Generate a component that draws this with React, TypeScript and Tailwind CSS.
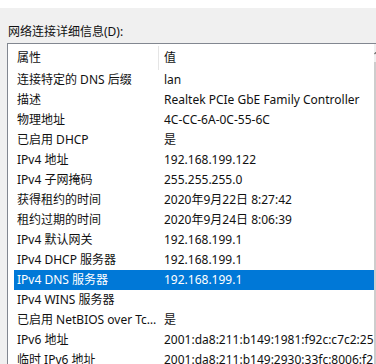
const rows: [string, string][] = [
  ["连接特定的 DNS 后缀", "lan"],
  ["描述", "Realtek PCIe GbE Family Controller"],
  ["物理地址", "4C-CC-6A-0C-55-6C"],
  ["已启用 DHCP", "是"],
  ["IPv4 地址", "192.168.199.122"],
  ["IPv4 子网掩码", "255.255.255.0"],
  ["获得租约的时间", "2020年9月22日 8:27:42"],
  ["租约过期的时间", "2020年9月24日 8:06:39"],
  ["IPv4 默认网关", "192.168.199.1"],
  ["IPv4 DHCP 服务器", "192.168.199.1"],
  ["IPv4 DNS 服务器", "192.168.199.1"],
  ["IPv4 WINS 服务器", ""],
  ["已启用 NetBIOS over Tcpip", "是"],
  ["IPv6 地址", "2001:da8:211:b149:1981:f92c:c7c2:25"],
  ["临时 IPv6 地址", "2001:da8:211:b149:2930:33fc:8006:f2"],
];

const font = {
  fontFamily: '"Noto Sans", "Noto Sans CJK SC", sans-serif',
};

export default function App() {
  const selected = 10;

  return (
    <div
      className="w-[376px] h-[364px] overflow-hidden bg-[#f0f0f0] text-[12px] text-[#111]"
      style={font}
    >
      <div className="h-2 bg-white" />
      <div className="h-[35px] pl-2 pt-[15px] leading-[18px]">网络连接详细信息(D):</div>

      <div className="ml-[7px] flex border-l border-t border-[#828790] bg-white">
        <div className="flex-1 pl-[6px]">
          <div className="flex h-[26px] items-center pt-[2px]">
            <div className="w-[144px] pl-[3px]">属性</div>
            <div className="h-full w-px bg-[#e5e5e5]" />
            <div className="pl-[5px]">值</div>
          </div>
          {rows.map(([k, v], i) => (
            <div
              key={i}
              className={
                i === selected
                  ? "flex h-5 items-center bg-[#0078d7] text-white"
                  : "flex h-5 items-center"
              }
            >
              <div className="w-[145px] truncate whitespace-nowrap pl-[3px] pr-[2px]">
                {k}
              </div>
              <div className="flex-1 overflow-hidden whitespace-nowrap pl-[5px]">
                {v}
              </div>
            </div>
          ))}
        </div>

        <div className="flex w-[9px] flex-col">
          <div className="flex h-[18px] items-start justify-center bg-[#f0f0f0] pt-[6px]">
            <svg width="7" height="5" viewBox="0 0 7 5">
              <path d="M0.5 4 L3.5 1 L6.5 4" stroke="#606060" strokeWidth="1.2" fill="none" />
            </svg>
          </div>
          <div className="flex-1 bg-[#cdcdcd]" />
        </div>
      </div>
    </div>
  );
}
